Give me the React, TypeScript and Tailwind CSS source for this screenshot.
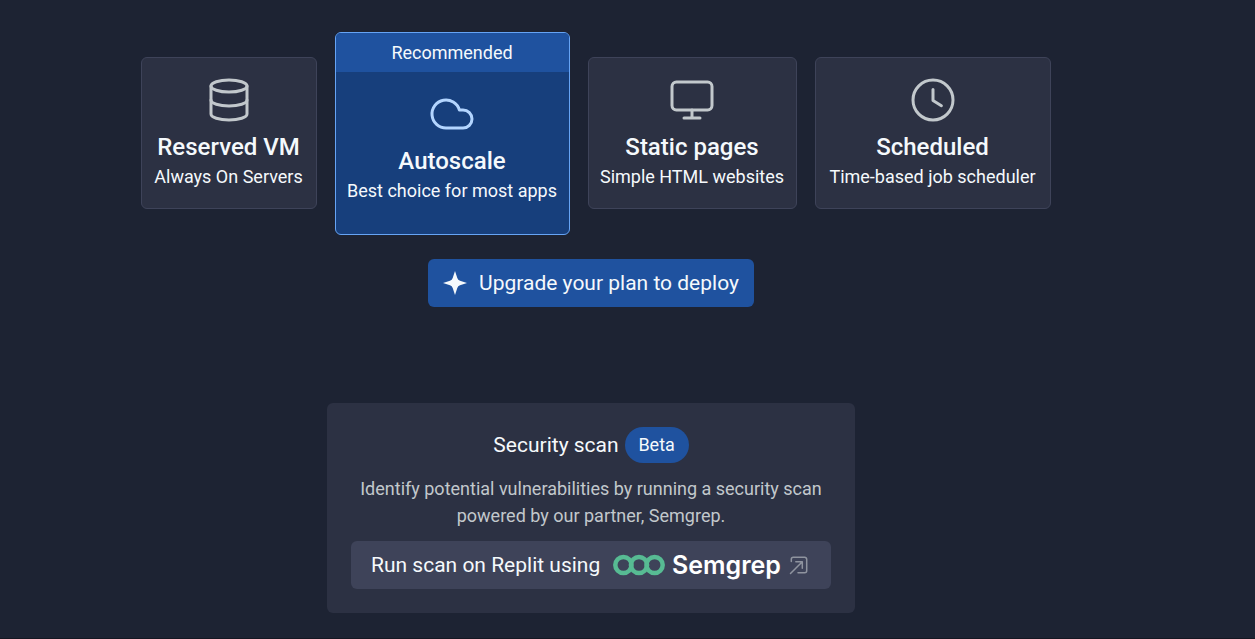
import type { ReactNode } from "react";

type Plan = {
  title: string;
  text: string;
  width: string;
  icon: ReactNode;
  recommended?: boolean;
};

const plans: Plan[] = [
  {
    title: "Reserved VM",
    text: "Always On Servers",
    width: "w-44",
    icon: (
      <>
        <ellipse cx="12" cy="5" rx="9" ry="3" />
        <path d="M3 5v14c0 1.66 4.03 3 9 3s9-1.34 9-3V5" />
        <path d="M3 12c0 1.66 4.03 3 9 3s9-1.34 9-3" />
      </>
    ),
  },
  {
    title: "Autoscale",
    text: "Best choice for most apps",
    width: "w-[235px]",
    recommended: true,
    icon: <path d="M17.5 19H9a7 7 0 1 1 6.71-9h1.79a4.5 4.5 0 1 1 0 9Z" />,
  },
  {
    title: "Static pages",
    text: "Simple HTML websites",
    width: "w-[209px]",
    icon: (
      <>
        <rect x="2" y="3" width="20" height="14" rx="2.2" />
        <path d="M8 21h8M12 17v4" />
      </>
    ),
  },
  {
    title: "Scheduled",
    text: "Time-based job scheduler",
    width: "w-[236px]",
    icon: (
      <>
        <circle cx="12" cy="12" r="10" />
        <path d="M12 6.75v5.5l4.2 2.6" />
      </>
    ),
  },
];

function PlanCard({ plan }: { plan: Plan }) {
  const tone = plan.recommended
    ? "border-[#66a4f5] bg-[#173f7c]"
    : "mt-[25px] border-[#3e4359] bg-[#2c3143]";
  return (
    <button
      type="button"
      className={`${plan.width} ${tone} overflow-hidden rounded-md border text-center text-[#f5f9fc]`}
    >
      {plan.recommended && (
        <span className="block bg-[#1f529f] py-1.5 text-lg leading-[27px]">Recommended</span>
      )}
      <span
        className={`flex flex-col items-center pt-[18px] ${plan.recommended ? "pb-7" : "pb-4"}`}
      >
        <svg
          viewBox="0 0 24 24"
          fill="none"
          stroke="currentColor"
          strokeWidth="1.5"
          strokeLinecap="round"
          strokeLinejoin="round"
          aria-hidden="true"
          className={`size-12 ${plan.recommended ? "text-[#b3d5ff]" : "text-[#c2c8cc]"}`}
        >
          {plan.icon}
        </svg>
        <span className="mt-2 text-2xl leading-[30px] font-medium whitespace-nowrap">{plan.title}</span>
        <span className="text-lg leading-[30px] whitespace-nowrap">{plan.text}</span>
      </span>
    </button>
  );
}

function SemgrepLogo() {
  return (
    <span className="flex items-center gap-[7px] text-white">
      <svg
        viewBox="0 0 52 22"
        fill="none"
        stroke="#57bb93"
        strokeWidth="4.5"
        aria-hidden="true"
        className="h-[22px] w-[52px]"
      >
        <circle cx="10.4" cy="11" r="8.1" />
        <circle cx="26" cy="11" r="8.1" />
        <circle cx="41.6" cy="11" r="8.1" />
      </svg>
      <span className="font-['Inter',sans-serif] text-[25px] leading-[30px] font-semibold">Semgrep</span>
    </span>
  );
}

export default function App() {
  return (
    <main className="flex min-h-screen flex-col items-center border-b border-[#151722] bg-[#1d2333] pt-8 pr-[73px] pb-[25px] font-['Roboto',sans-serif]">
      <div className="flex items-start gap-[18px] pl-[9px]">
        {plans.map((plan) => (
          <PlanCard key={plan.title} plan={plan} />
        ))}
      </div>

      <button
        type="button"
        className="mt-6 flex h-12 items-center gap-3 rounded-md bg-[#1f529f] px-[15px] text-[#f5f9fc]"
      >
        <svg viewBox="0 0 24 24" fill="currentColor" aria-hidden="true" className="size-6">
          <path d="M12 0l2.3 7a4 4 0 0 0 2.7 2.7L24 12l-7 2.3a4 4 0 0 0-2.7 2.7L12 24l-2.3-7a4 4 0 0 0-2.7-2.7L0 12l7-2.3a4 4 0 0 0 2.7-2.7Z" />
        </svg>
        <span className="text-[21px] leading-8">Upgrade your plan to deploy</span>
      </button>

      <section
        aria-labelledby="scan-title"
        className="mt-24 flex w-[528px] flex-col gap-3 rounded-md bg-[#2c3143] p-6 text-[#f5f9fc]"
      >
        <div className="flex items-center justify-center gap-1.5">
          <h2 id="scan-title" className="text-[21px] leading-8">
            Security scan
          </h2>
          <span className="flex h-9 w-16 items-center justify-center rounded-full bg-[#1f529f] text-lg">
            Beta
          </span>
        </div>
        <p className="text-center text-lg leading-[27px] text-[#c2c8cc]">
          Identify potential vulnerabilities by running a security scan powered by our partner,
          Semgrep.
        </p>
        <a href="#semgrep" className="flex h-12 items-center rounded-md bg-[#3e4359] pr-[22px] pl-5">
          <span className="w-[242px] text-[21px] leading-8">Run scan on Replit using</span>
          <SemgrepLogo />
          <svg
            viewBox="0 0 20 20"
            fill="none"
            stroke="currentColor"
            strokeWidth="1.5"
            strokeLinecap="round"
            strokeLinejoin="round"
            aria-hidden="true"
            className="ml-auto size-5 text-[#8f949f]"
          >
            <path d="M2.3 6.5V4.3a2 2 0 0 1 2-2h11.4a2 2 0 0 1 2 2v11.4a2 2 0 0 1-2 2H9" />
            <path d="M1.5 18.5 13.3 6.7M6.8 6.7h6.5v6.5" />
          </svg>
        </a>
      </section>
    </main>
  );
}
